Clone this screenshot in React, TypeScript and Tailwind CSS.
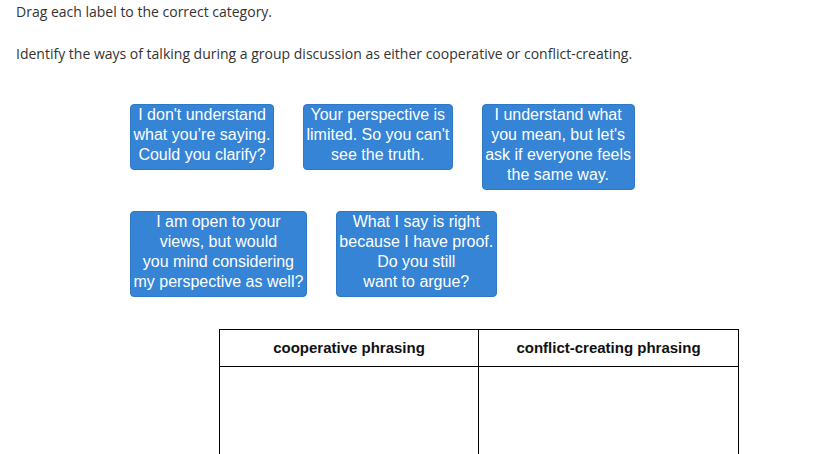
import React from 'react'

type LabelProps = {
    lines: string[]
}

const Label = ({ lines }: LabelProps) => (
    <div className="w-fit rounded-[4px] border border-[#2f78c6] bg-[#3584d6] px-[2.5px] pt-0 pb-[4px] text-center text-[16px] leading-[20px] text-white">
        {lines.map((line, i) => (
            <div key={i} className="whitespace-nowrap">
                {line}
            </div>
        ))}
    </div>
)

const App = () => {
    return (
        <div className="h-[454px] overflow-hidden bg-white font-['Liberation_Sans',Arial,sans-serif]">
            <div className="px-4 pt-[2px] font-['Open_Sans',sans-serif] text-[14px] leading-[20px] text-[#333]">
                <p>Drag each label to the correct category.</p>
                <p className="mt-[22px]">
                    Identify the ways of talking during a group discussion as
                    either cooperative or conflict-creating.
                </p>
            </div>

            <div className="ml-[130px] mt-[40px] flex flex-col gap-[21px]">
                <div className="flex items-start gap-[29px]">
                    <Label
                        lines={[
                            "I don't understand",
                            'what you’re saying.',
                            'Could you clarify?',
                        ]}
                    />
                    <Label
                        lines={[
                            'Your perspective is',
                            "limited. So you can't",
                            'see the truth.',
                        ]}
                    />
                    <Label
                        lines={[
                            'I understand what',
                            "you mean, but let's",
                            'ask if everyone feels',
                            'the same way.',
                        ]}
                    />
                </div>
                <div className="flex items-start gap-[29px]">
                    <Label
                        lines={[
                            'I am open to your',
                            'views, but would',
                            'you mind considering',
                            'my perspective as well?',
                        ]}
                    />
                    <Label
                        lines={[
                            'What I say is right',
                            'because I have proof.',
                            'Do you still',
                            'want to argue?',
                        ]}
                    />
                </div>
            </div>

            <div className="ml-[219px] mt-[32px] w-[520px] border border-b-0 border-black">
                <div className="grid grid-cols-2 border-b border-black">
                    <div className="flex h-[36px] items-center justify-center border-r border-black text-[15px] font-bold text-[#111]">
                        cooperative phrasing
                    </div>
                    <div className="flex h-[36px] items-center justify-center text-[15px] font-bold text-[#111]">
                        conflict-creating phrasing
                    </div>
                </div>
                <div className="grid h-[87px] grid-cols-2">
                    <div className="border-r border-black" />
                    <div />
                </div>
            </div>
        </div>
    )
}

export default App
